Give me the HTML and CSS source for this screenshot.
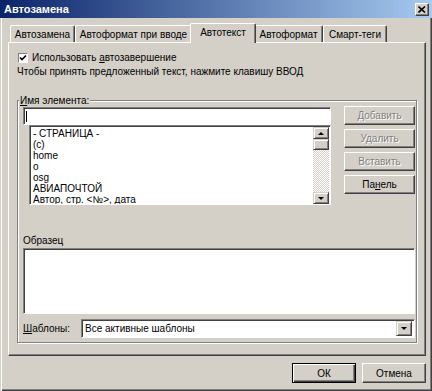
FILE: index.html
```html
<!DOCTYPE html>
<html lang="ru">
<head>
    <meta charset="UTF-8">
    <title>Автозамена</title>
    <link rel="stylesheet" href="styles.css">
</head>
<body>
<div class="window">
    <div class="titlebar">
        <span class="title">Автозамена</span>
        <span class="close">
            <svg width="8" height="7" viewBox="0 0 8 7"><path d="M0.5 0.5 L7 6.5 M7 0.5 L0.5 6.5" stroke="#000" stroke-width="1.6"/></svg>
        </span>
    </div>
    <div class="body">
        <div class="tabs">
            <div class="tab t1">Автозамена</div>
            <div class="tab t2">Автоформат при вводе</div>
            <div class="tab t3 active">Автотекст</div>
            <div class="tab t4">Автоформат</div>
            <div class="tab t5">Смарт-теги</div>
        </div>
        <div class="panel">
            <div class="check-row">
                <span class="checkbox">
                    <svg width="8" height="8" viewBox="0 0 8 8"><path d="M1 3.5 L3 5.5 L7 1.5" stroke="#000" stroke-width="1.6" fill="none"/></svg>
                </span>
                <span>Использовать <u>а</u>втозавершение</span>
            </div>
            <div class="hint">Чтобы принять предложенный текст, нажмите клавишу ВВОД</div>

            <div class="group">
                <div class="legend"><u>И</u>мя элемента:</div>
                <div class="group-top">
                    <div class="entry">
                        <div class="field"><span class="caret"></span></div>
                        <div class="list">
                            <ul class="items">
                                <li>- СТРАНИЦА -</li>
                                <li>(c)</li>
                                <li>home</li>
                                <li>o</li>
                                <li>osg</li>
                                <li>АВИАПОЧТОЙ</li>
                                <li>Автор, стр. &lt;№&gt;, дата</li>
                            </ul>
                            <div class="scroll">
                                <div class="sbtn"><span class="arrow up"></span></div>
                                <div class="thumb"></div>
                                <div class="track"></div>
                                <div class="sbtn"><span class="arrow down"></span></div>
                            </div>
                        </div>
                    </div>
                    <div class="side-buttons">
                        <button class="btn" disabled><u>Д</u>обавить</button>
                        <button class="btn" disabled><u>У</u>далить</button>
                        <button class="btn" disabled><u>В</u>ставить</button>
                        <button class="btn">Па<u>н</u>ель</button>
                    </div>
                </div>
                <div class="sample-label">Образец</div>
                <div class="sample"></div>
                <div class="templates">
                    <span class="templates-label"><u>Ш</u>аблоны:</span>
                    <div class="select">
                        <span class="select-text">Все активные шаблоны</span>
                        <span class="sbtn drop"><span class="arrow down"></span></span>
                    </div>
                </div>
            </div>
        </div>
        <div class="footer">
            <button class="btn wide default">ОК</button>
            <button class="btn wide">Отмена</button>
        </div>
    </div>
</div>
</body>
</html>
```

FILE: styles.css
```css
* {
    box-sizing: border-box;
}
body {
    margin: 0;
    font-family: "Liberation Sans", Arial, sans-serif;
    font-size: 10px;
    color: #000;
    background: #d4d0c8;
}
.window {
    width: 432px;
    height: 391px;
    display: flex;
    flex-direction: column;
    background: #d4d0c8;
    box-shadow: inset 1px 0 #d4d0c8, inset 2px 0 #fff,
                inset -1px -1px #404040, inset -2px -2px #808080;
}
.titlebar {
    height: 18px;
    display: flex;
    align-items: center;
    justify-content: space-between;
    padding: 0 3px 0 4px;
    background: linear-gradient(to right, #0a246a, #a6caf0);
}
.title {
    color: #fff;
    font-weight: bold;
    font-size: 11px;
}
.close {
    width: 14px;
    height: 13px;
    display: flex;
    align-items: center;
    justify-content: center;
    background: #d4d0c8;
    border: 1px solid;
    border-color: #fff #404040 #404040 #fff;
    box-shadow: inset -1px -1px #808080;
}

.body {
    padding: 5px 6px 0 8px;
}

/* вкладки */
.tabs {
    height: 19px;
    display: flex;
    align-items: flex-end;
    padding-left: 2px;
}
.tab {
    height: 17px;
    display: flex;
    align-items: center;
    justify-content: center;
    white-space: nowrap;
    border: 1px solid;
    border-bottom: none;
    border-color: #fff #404040 #fff #fff;
    border-radius: 2px 2px 0 0;
    box-shadow: inset -1px 0 #808080;
}
.t1 { width: 65px; }
.t2 { width: 117px; }
.t3 { width: 62px; }
.t4 { width: 69px; }
.t5 { width: 64px; }
.tab.active {
    position: relative;
    z-index: 1;
    height: 20px;
    margin: 0 -2px -1px;
    width: 66px;
    background: #d4d0c8;
    padding-bottom: 2px;
}

.panel {
    height: 314px;
    padding: 9px 0 0 8px;
    border: 1px solid;
    border-color: #fff #404040 #404040 #fff;
    box-shadow: inset -1px -1px #808080;
}
.check-row {
    height: 11px;
    display: flex;
    align-items: center;
    gap: 4px;
}
.checkbox {
    width: 10px;
    height: 10px;
    margin-left: 1px;
    display: flex;
    align-items: center;
    justify-content: center;
    background: #fff;
    border: 1px solid;
    border-color: #808080 #fff #fff #808080;
}
.hint {
    margin-top: 3px;
    line-height: 11px;
    white-space: nowrap;
}

/* группа */
.group {
    width: 400px;
    margin-top: 23px;
    display: flex;
    flex-direction: column;
    padding: 0 1px 4px 5px;
    border: 1px solid #808080;
    box-shadow: inset 1px 1px #fff, 1px 1px #fff;
}
.legend {
    align-self: flex-start;
    margin: -6px 0 0 -4px;
    padding: 0 1px;
    line-height: 11px;
    background: #d4d0c8;
}
.group-top {
    margin-top: 1px;
    display: flex;
    justify-content: space-between;
}
.entry {
    width: 308px;
}
.field {
    height: 18px;
    padding: 3px 0 0 2px;
    background: #fff;
    border: 1px solid;
    border-color: #808080 #fff #fff #808080;
    box-shadow: inset 1px 1px #404040;
}
.caret {
    display: block;
    width: 1px;
    height: 11px;
    background: #000;
}
.list {
    width: 302px;
    height: 80px;
    margin-left: 6px;
    display: flex;
    background: #fff;
    border: 1px solid;
    border-color: #808080 #fff #fff #808080;
    box-shadow: inset 1px 1px #404040;
}
.items {
    flex: 1;
    list-style: none;
    margin: 0;
    padding: 2px 0 0 3px;
    line-height: 11px;
    overflow: hidden;
}
.scroll {
    width: 16px;
    margin: 1px 1px 0 0;
    display: flex;
    flex-direction: column;
}
.sbtn {
    height: 12px;
    display: flex;
    align-items: center;
    justify-content: center;
    background: #d4d0c8;
    border: 1px solid;
    border-color: #d4d0c8 #404040 #404040 #d4d0c8;
    box-shadow: inset 1px 1px #fff, inset -1px -1px #808080;
}
.thumb {
    height: 11px;
    background: #d4d0c8;
    border: 1px solid;
    border-color: #d4d0c8 #404040 #404040 #d4d0c8;
    box-shadow: inset 1px 1px #fff, inset -1px -1px #808080;
}
.track {
    flex: 1;
    background: repeating-conic-gradient(#fff 0 25%, #d4d0c8 0 50%) 0 0 / 2px 2px;
}
.arrow {
    width: 0;
    height: 0;
    border-left: 3px solid transparent;
    border-right: 3px solid transparent;
}
.arrow.up {
    border-bottom: 3px solid #000;
}
.arrow.down {
    border-top: 3px solid #000;
}

.side-buttons {
    width: 71px;
    margin-top: -1px;
    display: flex;
    flex-direction: column;
    gap: 4px;
}
.btn {
    height: 19px;
    padding: 0;
    font: inherit;
    color: #000;
    background: #d4d0c8;
    border: 1px solid;
    border-color: #fff #404040 #404040 #fff;
    box-shadow: inset -1px -1px #808080;
}
.btn u {
    text-decoration: none;
}
.btn:last-child u {
    text-decoration: underline;
}
.btn:disabled {
    color: #808080;
    text-shadow: 1px 1px #fff;
}

.sample-label {
    margin-top: 30px;
    line-height: 11px;
}
.sample {
    height: 66px;
    margin-top: 2px;
    background: #fff;
    border: 1px solid;
    border-color: #808080 #fff #fff #808080;
    box-shadow: inset 1px 1px #404040;
}
.templates {
    height: 19px;
    margin-top: 5px;
    display: flex;
    align-items: center;
    justify-content: space-between;
}
.select {
    width: 334px;
    height: 19px;
    display: flex;
    align-items: center;
    padding: 2px 2px 2px 3px;
    background: #fff;
    border: 1px solid;
    border-color: #808080 #fff #fff #808080;
    box-shadow: inset 1px 1px #404040;
}
.select-text {
    flex: 1;
}
.drop {
    width: 16px;
    height: 15px;
}

.footer {
    margin-top: 7px;
    display: flex;
    justify-content: flex-end;
    gap: 6px;
}
.btn.wide {
    width: 64px;
    height: 20px;
}
.btn.default {
    border-color: #000;
    box-shadow: inset 1px 1px #fff, inset -1px -1px #404040, inset -2px -2px #808080;
}
```
